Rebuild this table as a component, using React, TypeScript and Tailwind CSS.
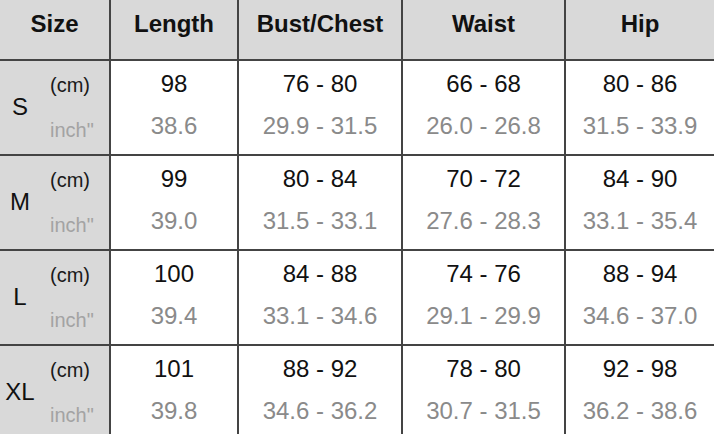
import React from "react"

type Row = {
  size: string
  cm: string[]
  inch: string[]
}

const headers = ["Size", "Length", "Bust/Chest", "Waist", "Hip"]

const rows: Row[] = [
  { size: "S", cm: ["98", "76 - 80", "66 - 68", "80 - 86"], inch: ["38.6", "29.9 - 31.5", "26.0 - 26.8", "31.5 - 33.9"] },
  { size: "M", cm: ["99", "80 - 84", "70 - 72", "84 - 90"], inch: ["39.0", "31.5 - 33.1", "27.6 - 28.3", "33.1 - 35.4"] },
  { size: "L", cm: ["100", "84 - 88", "74 - 76", "88 - 94"], inch: ["39.4", "33.1 - 34.6", "29.1 - 29.9", "34.6 - 37.0"] },
  { size: "XL", cm: ["101", "88 - 92", "78 - 80", "92 - 98"], inch: ["39.8", "34.6 - 36.2", "30.7 - 31.5", "36.2 - 38.6"] },
]

const cols = "grid grid-cols-[111px_128px_164px_163px_1fr]"

export default function App() {
  return (
    <div className="w-[714px] h-[434px] overflow-hidden bg-white font-['Liberation_Sans',Arial,sans-serif]">
      {/* шапка таблицы */}
      <div className={`${cols} h-[61px] bg-[#d9d9d9] border-b-2 border-[#444]`}>
        {headers.map((h, i) => (
          <div
            key={h}
            className={`pt-[10px] text-center text-[24px] leading-[28px] font-bold text-[#111] ${
              i < headers.length - 1 ? "border-r-2 border-[#444]" : ""
            }`}
          >
            {h}
          </div>
        ))}
      </div>

      {rows.map((row) => (
        <div key={row.size} className={`${cols} h-[95px] shrink-0 border-b-2 border-[#444]`}>
          <div className="flex bg-[#d9d9d9] border-r-2 border-[#444]">
            <div className="w-[40px] flex items-center justify-center text-[24px] leading-[28px] text-[#111] pb-[1px]">
              {row.size}
            </div>
            <div className="pl-[10px] pt-[12px] flex flex-col gap-[21px] text-[20px] leading-[24px]">
              <span className="text-[#1a1a1a]">(cm)</span>
              <span className="text-[#a3a3a3]">inch"</span>
            </div>
          </div>
          {row.cm.map((v, i) => (
            <div
              key={i}
              className={`bg-white pt-[9px] flex flex-col gap-[14px] text-center text-[24px] leading-[28px] ${
                i < row.cm.length - 1 ? "border-r-2 border-[#444]" : ""
              }`}
            >
              <span className="text-[#111]">{v}</span>
              <span className="text-[#8a8a8a]">{row.inch[i]}</span>
            </div>
          ))}
        </div>
      ))}
    </div>
  )
}
